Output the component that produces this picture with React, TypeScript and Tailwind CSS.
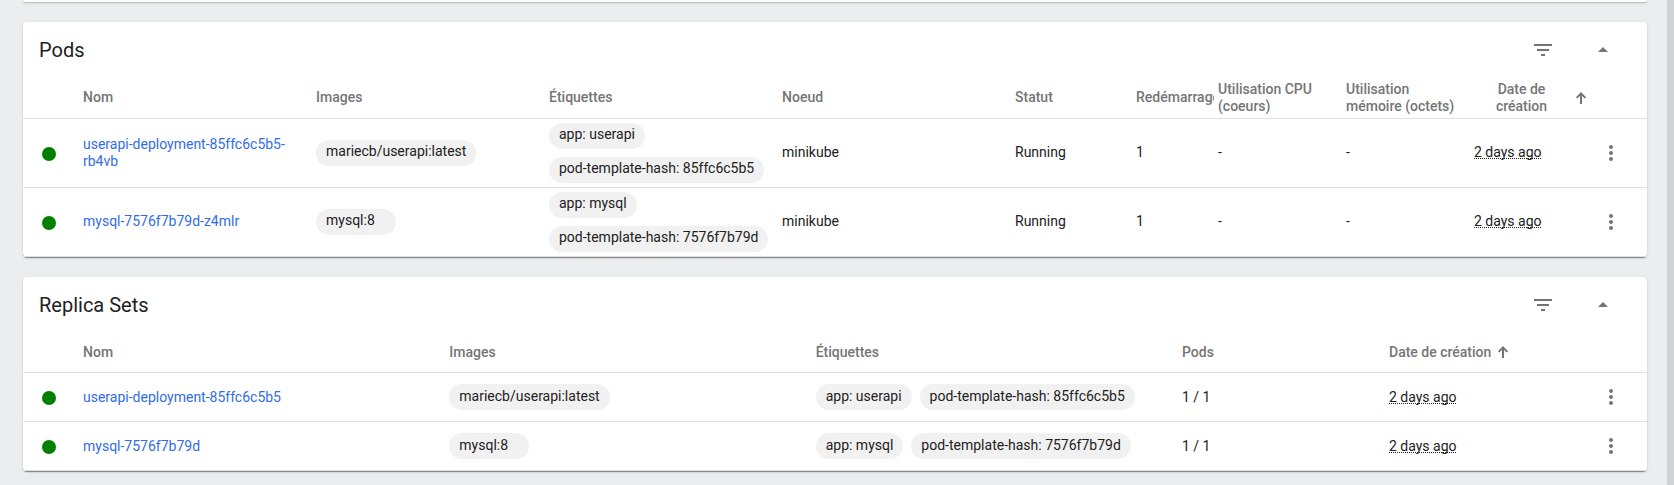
import type { ReactNode } from "react";

const ACTION_BUTTON =
  "flex size-10 items-center justify-center rounded-full text-[#757575]";

const ELEVATION =
  "shadow-[0_2px_1px_-1px_rgba(0,0,0,0.3),0_1px_1px_0_rgba(0,0,0,0.16),0_1px_3px_0_rgba(0,0,0,0.12)]";

function Icon({ d }: { d: string }) {
  return (
    <svg viewBox="0 0 24 24" className="size-6" fill="currentColor" aria-hidden="true">
      <path d={d} />
    </svg>
  );
}

function SortArrow() {
  return (
    <svg viewBox="0 0 12 12" className="size-3 shrink-0" aria-hidden="true">
      <path d="M6 12V1.6M1.6 5.9L6 1.5L10.4 5.9" fill="none" stroke="#757575" strokeWidth="2" />
    </svg>
  );
}

function Card({ title, children }: { title: string; children: ReactNode }) {
  return (
    <section className={`rounded bg-white ${ELEVATION}`}>
      <header className="flex h-14 items-center justify-between pr-6 pl-4">
        <h2 className="text-xl text-[#212121]">{title}</h2>
        <div className="flex gap-5">
          <button type="button" aria-label="Filtrer" className={ACTION_BUTTON}>
            <Icon d="M10 18h4v-2h-4v2zM3 6v2h18V6H3zm3 7h12v-2H6v2z" />
          </button>
          <button type="button" aria-label="Réduire" className={ACTION_BUTTON}>
            <Icon d="M7 14l5-5 5 5z" />
          </button>
        </div>
      </header>
      {children}
    </section>
  );
}

function Chip({ children }: { children: ReactNode }) {
  return (
    <span className="inline-flex h-[26px] min-w-20 items-center rounded-full bg-[#f1f1f1] px-2.5 pb-0.5 whitespace-nowrap">
      {children}
    </span>
  );
}

function Chips({ items }: { items: string[] }) {
  return (
    <div className="flex flex-wrap gap-2">
      {items.map((item) => (
        <Chip key={item}>{item}</Chip>
      ))}
    </div>
  );
}

function StatusCell() {
  return (
    <td className="pt-0.5 pl-[19px]">
      <span className="block size-3.5 rounded-full bg-[#008000]" />
    </td>
  );
}

function NameCell({ name }: { name: string }) {
  return (
    <td className="pr-6">
      <a href="#" className="text-[#326de6]">
        {name}
      </a>
    </td>
  );
}

function AgeCell() {
  return (
    <td>
      <span className="underline decoration-dotted decoration-1 underline-offset-1 [text-decoration-skip-ink:none]">
        2 days ago
      </span>
    </td>
  );
}

function MenuCell() {
  return (
    <td className="pl-1">
      <button type="button" aria-label="Actions" className={ACTION_BUTTON}>
        <Icon d="M12 8c1.1 0 2-.9 2-2s-.9-2-2-2-2 .9-2 2 .9 2 2 2zm0 2c-1.1 0-2 .9-2 2s.9 2 2 2 2-.9 2-2-.9-2-2-2zm0 6c-1.1 0-2 .9-2 2s.9 2 2 2 2-.9 2-2-.9-2-2-2z" />
      </button>
    </td>
  );
}

const TABLE = "w-full table-fixed border-collapse text-left text-sm leading-[17px] text-[#212121]";
const HEAD_ROW = "h-10 border-b border-[#e0e0e0] text-[#757575] *:font-medium";

const PODS = [
  {
    name: "userapi-deployment-85ffc6c5b5-rb4vb",
    image: "mariecb/userapi:latest",
    labels: ["app: userapi", "pod-template-hash: 85ffc6c5b5"],
  },
  {
    name: "mysql-7576f7b79d-z4mlr",
    image: "mysql:8",
    labels: ["app: mysql", "pod-template-hash: 7576f7b79d"],
  },
];

const REPLICA_SETS = [
  {
    name: "userapi-deployment-85ffc6c5b5",
    image: "mariecb/userapi:latest",
    labels: ["app: userapi", "pod-template-hash: 85ffc6c5b5"],
  },
  {
    name: "mysql-7576f7b79d",
    image: "mysql:8",
    labels: ["app: mysql", "pod-template-hash: 7576f7b79d"],
  },
];

function PodsTable() {
  return (
    <table className={TABLE}>
      <colgroup>
        <col className="w-[60px]" />
        <col />
        <col />
        <col />
        <col />
        <col className="w-[121px]" />
        <col className="w-[82px]" />
        <col className="w-32" />
        <col className="w-32" />
        <col className="w-[113px]" />
        <col className="w-[60px]" />
      </colgroup>
      <thead>
        <tr className={HEAD_ROW}>
          <td />
          <th>Nom</th>
          <th>Images</th>
          <th>Étiquettes</th>
          <th>Noeud</th>
          <th>Statut</th>
          <th className="pr-1">
            <div className="overflow-hidden whitespace-nowrap">Redémarrages</div>
          </th>
          <th className="pr-4">Utilisation CPU (coeurs)</th>
          <th className="pr-4">Utilisation mémoire (octets)</th>
          <th>
            <button type="button" className="flex w-full items-center gap-1.5 font-medium">
              <span className="flex-1 px-4 text-center">Date de création</span>
              <SortArrow />
            </button>
          </th>
          <td />
        </tr>
      </thead>
      <tbody>
        {PODS.map((pod) => (
          <tr key={pod.name} className="h-[69px] border-b border-[#e0e0e0]">
            <StatusCell />
            <NameCell name={pod.name} />
            <td>
              <Chips items={[pod.image]} />
            </td>
            <td>
              <Chips items={pod.labels} />
            </td>
            <td>minikube</td>
            <td>Running</td>
            <td>1</td>
            <td>-</td>
            <td>-</td>
            <AgeCell />
            <MenuCell />
          </tr>
        ))}
      </tbody>
    </table>
  );
}

function ReplicaSetsTable() {
  return (
    <table className={TABLE}>
      <colgroup>
        <col className="w-[60px]" />
        <col />
        <col />
        <col />
        <col className="w-[207px]" />
        <col className="w-[198px]" />
        <col className="w-[60px]" />
      </colgroup>
      <thead>
        <tr className={HEAD_ROW}>
          <td />
          <th>Nom</th>
          <th>Images</th>
          <th>Étiquettes</th>
          <th>Pods</th>
          <th>
            <button type="button" className="flex items-center gap-1.5 font-medium">
              Date de création
              <SortArrow />
            </button>
          </th>
          <td />
        </tr>
      </thead>
      <tbody>
        {REPLICA_SETS.map((set) => (
          <tr key={set.name} className="h-[49px] border-b border-[#e0e0e0]">
            <StatusCell />
            <NameCell name={set.name} />
            <td>
              <Chips items={[set.image]} />
            </td>
            <td>
              <Chips items={set.labels} />
            </td>
            <td>1 / 1</td>
            <AgeCell />
            <MenuCell />
          </tr>
        ))}
      </tbody>
    </table>
  );
}

export default function App() {
  return (
    <div className="flex min-h-screen bg-[#ecedef] font-[Roboto,sans-serif]">
      <main className="flex min-w-0 flex-1 flex-col gap-5 pr-5 pb-3 pl-[23px]">
        <div className={`h-0.5 rounded-b bg-white ${ELEVATION}`} />
        <Card title="Pods">
          <PodsTable />
        </Card>
        <Card title="Replica Sets">
          <ReplicaSetsTable />
        </Card>
      </main>
      <div className="w-[7px] bg-[#d1d2d4]" />
    </div>
  );
}
